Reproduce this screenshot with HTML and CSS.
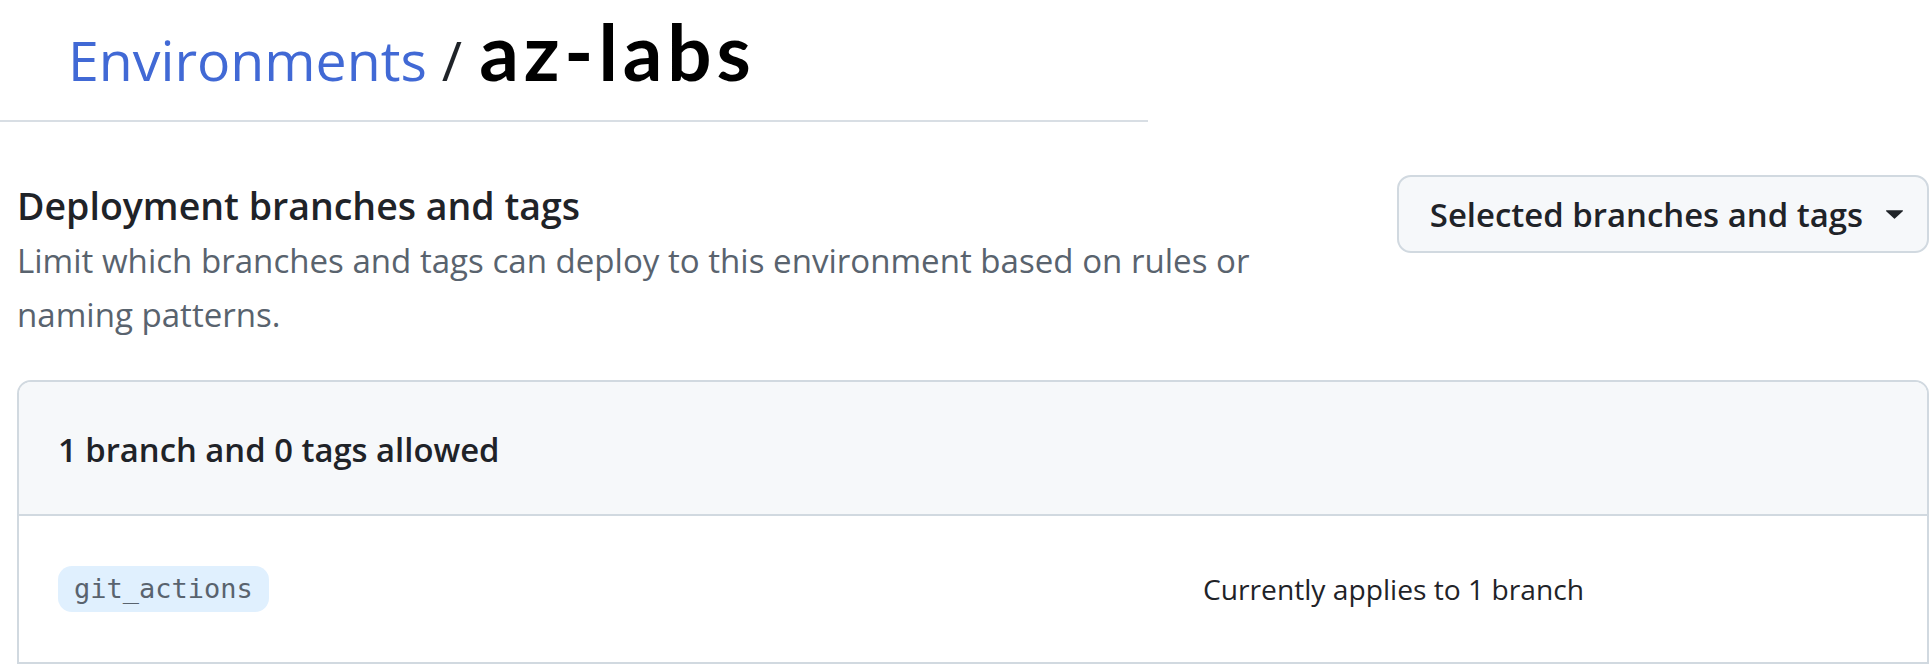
FILE: index.html
```html
<!DOCTYPE html>
<html lang="en">
<head>
<meta charset="utf-8">
<title>Environments / az-labs</title>
<link rel="stylesheet" href="styles.css">
</head>
<body>
<header class="title-bar">
  <h1 class="breadcrumb"><a class="crumb-link" href="#">Environments</a><span class="crumb-sep">/</span><span class="crumb-current">az-labs</span></h1>
</header>
<main class="content">
  <section class="policy-head">
    <div class="policy-text">
      <h2 class="policy-title">Deployment branches and tags</h2>
      <p class="policy-desc">Limit which branches and tags can deploy to this environment based on rules or naming patterns.</p>
    </div>
    <button class="select-btn" type="button"><span>Selected branches and tags</span><svg class="caret" viewBox="0 0 17 9" aria-hidden="true"><path d="M0.6 0.2H16.4a.6.6 0 0 1 .42 1.02L8.92 8.6a.6.6 0 0 1-.84 0L.18 1.22A.6.6 0 0 1 .6.2Z" fill="#1f2328"/></svg></button>
  </section>
  <div class="rules-box">
    <div class="rules-header">1 branch and 0 tags allowed</div>
    <div class="rule-row">
      <div class="rule-name"><span class="pattern">git_actions</span></div>
      <div class="rule-applies">Currently applies to 1 branch</div>
    </div>
  </div>
</main>
</body>
</html>
```
FILE: styles.css
```css
html, body {
  margin: 0;
  background: #ffffff;
}

body {
  font-family: "Open Sans", "Noto Sans", sans-serif;
  color: #1f2328;
}

.title-bar {
  width: 1148px;
  box-sizing: border-box;
  padding: 20px 0 20px 68px;
  border-bottom: 2px solid #d8dee4;
}

.breadcrumb {
  margin: 0;
  font-size: 55.4px;
  font-weight: 400;
  line-height: 80px;
  white-space: nowrap;
}

.crumb-link {
  color: #4169d5;
  text-decoration: none;
}

.crumb-sep {
  margin-left: 15px;
  color: #1f2328;
}

.crumb-current {
  margin-left: 17px;
  font-family: Lato, sans-serif;
  font-weight: 700;
  font-size: 78px;
  line-height: 60px;
  letter-spacing: 5px;
  color: #000000;
}

.content {
  padding: 0 1px 0 17px;
}

.policy-head {
  display: flex;
  justify-content: space-between;
  align-items: flex-start;
  margin-top: 53px;
}

.policy-text {
  padding-top: 7px;
  max-width: 1320px;
}

.policy-title {
  margin: 0;
  font-size: 37.5px;
  font-weight: 600;
  line-height: 48px;
}

.policy-desc {
  margin: 4px 0 0;
  font-size: 33.1px;
  line-height: 54px;
  color: #59636e;
}

.select-btn {
  display: flex;
  align-items: center;
  height: 78px;
  box-sizing: border-box;
  padding: 0 24px 0 31px;
  border: 2px solid #d1d9e0;
  border-radius: 14px;
  background: #f6f8fa;
  font-family: inherit;
  font-size: 32.9px;
  font-weight: 600;
  color: #1f2328;
  white-space: nowrap;
}

.caret {
  margin-left: 23px;
  width: 17px;
  height: 9px;
}

.rules-box {
  margin-top: 38px;
  border: 2px solid #d1d9e0;
  border-radius: 14px 14px 0 0;
}

.rules-header {
  padding: 41px 39px 37px;
  background: #f6f8fa;
  border-bottom: 2px solid #d1d9e0;
  border-radius: 12px 12px 0 0;
  font-size: 32.8px;
  font-weight: 600;
  line-height: 54px;
}

.rule-row {
  display: grid;
  grid-template-columns: 1fr 685px;
  align-items: center;
  height: 146px;
  padding: 0 39px;
}

.pattern {
  display: inline-block;
  height: 46px;
  line-height: 46px;
  padding: 0 16px;
  border-radius: 14px;
  background: #e0f0fe;
  font-family: "DejaVu Sans Mono", monospace;
  font-size: 27px;
  color: #59636e;
}

.rule-applies {
  font-size: 28.2px;
  line-height: 54px;
}
```
